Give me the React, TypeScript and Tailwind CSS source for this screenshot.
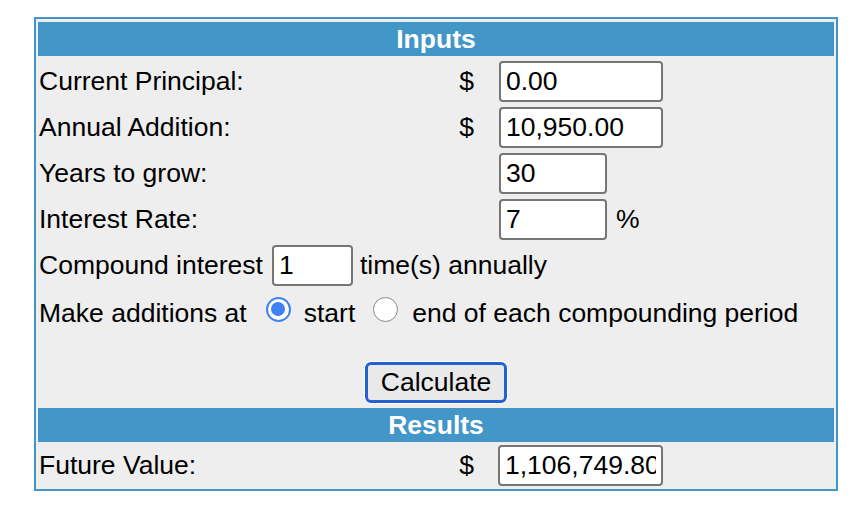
import React from "react";

const inputCls =
  "h-[41px] border-2 border-[#767676] rounded-[4px] bg-white px-[5px] text-black outline-none";

function Radio({ checked }: { checked: boolean }) {
  return checked ? (
    <span className="inline-flex w-[25px] h-[25px] rounded-full border-[2.5px] border-[#3f82f2] bg-white items-center justify-center -translate-y-[4px]">
      <span className="w-[14px] h-[14px] rounded-full bg-[#3f82f2]" />
    </span>
  ) : (
    <span className="inline-block w-[25px] h-[25px] rounded-full border-[1.5px] border-[#8a8a8a] bg-white -translate-y-[4px]" />
  );
}

export default function App() {
  return (
    <div
      className="min-h-screen bg-white pt-[17px] pl-[34px]"
      style={{ fontFamily: '"Liberation Sans", Arial, Helvetica, sans-serif' }}
    >
      <div className="w-[804px] border-2 border-[#4396c8] bg-[#eeeeee] px-[2px] pt-[3px] pb-[2px] text-[26.5px] leading-none text-black">
        <div className="h-[34px] bg-[#4396c8] flex items-center justify-center font-bold text-white">
          Inputs
        </div>
        <div className="mt-[2px]">
          <div className="h-[46px] flex items-center">
            <div className="w-[421px] pl-[1px]">Current Principal:</div>
            <div className="w-[15px] text-center">$</div>
            <input className={`${inputCls} ml-[25px] w-[164px]`} defaultValue="0.00" />
          </div>
          <div className="h-[46px] flex items-center">
            <div className="w-[421px] pl-[1px]">Annual Addition:</div>
            <div className="w-[15px] text-center">$</div>
            <input className={`${inputCls} ml-[25px] w-[164px]`} defaultValue="10,950.00" />
          </div>
          <div className="h-[46px] flex items-center">
            <div className="w-[421px] pl-[1px]">Years to grow:</div>
            <div className="w-[15px]" />
            <input className={`${inputCls} ml-[25px] w-[108px]`} defaultValue="30" />
          </div>
          <div className="h-[46px] flex items-center">
            <div className="w-[421px] pl-[1px]">Interest Rate:</div>
            <div className="w-[15px]" />
            <input className={`${inputCls} ml-[25px] w-[108px]`} defaultValue="7" />
            <span className="ml-[9px]">%</span>
          </div>
          <div className="h-[46px] flex items-center pl-[1px]">
            <span>Compound interest</span>
            <input className={`${inputCls} ml-[9px] w-[81px]`} defaultValue="1" />
            <span className="ml-[7px]">time(s) annually</span>
          </div>
          <div className="h-[46px] flex items-center pl-[1px] pt-[4px]">
            <span>Make additions at</span>
            <span className="ml-[19px] flex">
              <Radio checked />
            </span>
            <span className="ml-[13px]">start</span>
            <span className="ml-[18px] flex">
              <Radio checked={false} />
            </span>
            <span className="ml-[14px]">end of each compounding period</span>
          </div>
          <div className="h-[72px] flex items-end justify-center pb-[3px]">
            <button className="w-[142px] h-[41px] border-[3px] border-[#2462d4] rounded-[6px] bg-[#e9e9e9] shadow-[0_0_0_1px_#ffffff] text-black">
              Calculate
            </button>
          </div>
        </div>
        <div className="mt-[2px] h-[34px] bg-[#4396c8] flex items-center justify-center font-bold text-white">
          Results
        </div>
        <div className="mt-[2px] h-[43px] flex items-center">
          <div className="w-[421px] pl-[1px]">Future Value:</div>
          <div className="w-[15px] text-center">$</div>
          <input
            className={`${inputCls} ml-[24px] w-[165px]`}
            defaultValue="1,106,749.80"
            readOnly
          />
        </div>
      </div>
    </div>
  );
}
